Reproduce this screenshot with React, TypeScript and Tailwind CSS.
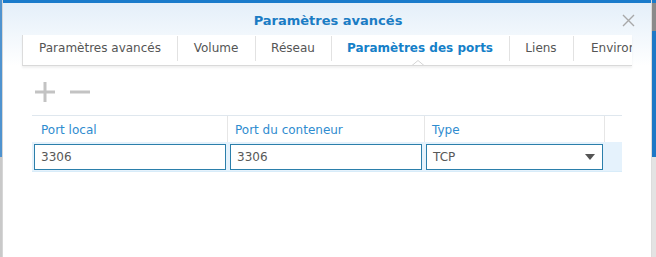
import React from 'react';

const tabs = [
  { name: 'Paramètres avancés', w: 'w-[154px]' },
  { name: 'Volume', w: 'w-[78px]' },
  { name: 'Réseau', w: 'w-[76px]' },
  { name: 'Paramètres des ports', w: 'w-[178px]', active: true },
  { name: 'Liens', w: 'w-[64px]' },
  { name: 'Environnement', w: 'w-[60px]' },
];

const PortInput = ({ value, className }: { value: string; className: string }) => (
  <div
    className={`h-[26px] border border-[#2b7fab] bg-white flex items-center pl-[6px] pt-[1px] text-[12px] text-[#585858] ${className}`}
  >
    {value}
  </div>
);

const App: React.FC = () => {
  return (
    <div
      className="w-[656px] h-[257px] flex overflow-hidden bg-white"
      style={{ fontFamily: '"DejaVu Sans", Verdana, sans-serif' }}
    >
      {/* background strip left */}
      <div className="w-[2px] flex flex-col">
        <div className="h-[157px] bg-[#4f93cf]" />
        <div className="flex-1 bg-[#c9c9c9]" />
      </div>

      {/* dialog */}
      <div className="w-[649px] flex flex-col border-l border-[#d6d6d6]">
        {/* header */}
        <div className="h-[3px] bg-[#1a7bcb]" />
        <div className="bg-gradient-to-b from-[#e4eff9] to-white">
          <div className="h-[32px] flex items-center relative pt-[3px]">
            <div className="flex-1 text-center text-[13px] font-bold text-[#1b7cc4] pl-[2px]">
              Paramètres avancés
            </div>
            <svg className="absolute left-[619px] top-[11px]" width="13" height="13" viewBox="0 0 13 13">
              <path d="M1 1 L12 12 M12 1 L1 12" stroke="#a8a8a8" strokeWidth="1.4" fill="none" />
            </svg>
          </div>

          {/* tabs */}
          <div className="ml-[19px] w-[610px] h-[31px] flex border-l border-[#dcdcdc] border-b border-b-[#d9d9d9] shadow-[0_2px_2px_rgba(0,0,0,0.06)] bg-white overflow-hidden relative">
            {tabs.map((t, i) => (
              <div key={t.name} className={`${t.w} shrink-0 h-full flex items-center relative`}>
                {i > 0 && <div className="absolute left-0 top-[1px] h-[25px] w-px bg-[#e2e2e2]" />}
                <div
                  className={`w-full text-[12px] whitespace-nowrap pb-[5px] ${
                    i === tabs.length - 1 ? 'pl-[18px]' : 'text-center'
                  } ${t.active ? 'font-bold text-[#1580c8]' : 'text-[#555]'}`}
                >
                  {t.name}
                </div>
                {t.active && (
                  <svg className="absolute left-[81px] bottom-[-1px]" width="12" height="6" viewBox="0 0 12 6">
                    <path d="M0 5.5 L6 0.5 L12 5.5" fill="white" stroke="#d4d4d4" strokeWidth="1" />
                  </svg>
                )}
              </div>
            ))}
          </div>
        </div>

        {/* toolbar */}
        <div className="h-[49px] flex items-center gap-[15px] pl-[32px] pt-[3px]">
          <svg width="20" height="20" viewBox="0 0 20 20">
            <path d="M10 0 V20 M0 10 H20" stroke="#c3c3c3" strokeWidth="3" />
          </svg>
          <svg width="20" height="20" viewBox="0 0 20 20">
            <path d="M0 10 H20" stroke="#c3c3c3" strokeWidth="3" />
          </svg>
        </div>

        {/* grid */}
        <div className="ml-[29px] w-[590px] flex flex-col">
          <div className="h-[27px] flex border-t border-[#dfe7ee] text-[12px] text-[#2f8ccf]">
            <div className="w-[196px] flex items-center pl-[9px] pt-[1px] border-r border-[#e6e6e6]">Port local</div>
            <div className="w-[197px] flex items-center pl-[7px] pt-[1px] border-r border-[#e6e6e6]">Port du conteneur</div>
            <div className="w-[180px] flex items-center pl-[7px] pt-[1px] border-r border-[#e6e6e6]">Type</div>
            <div className="flex-1" />
          </div>
          <div className="h-[30px] flex items-center bg-[#e5f2fc] border-b border-[#d8ecf9]">
            <div className="w-[196px] px-[2px]">
              <PortInput value="3306" className="w-full" />
            </div>
            <div className="w-[197px] pl-[2px] pr-[3px]">
              <PortInput value="3306" className="w-full" />
            </div>
            <div className="w-[180px] pl-[1px] pr-[2px]">
              <div className="h-[26px] border border-[#2b7fab] bg-white flex items-center justify-between pl-[6px] pr-[7px] pt-[1px] text-[12px] text-[#585858]">
                <span>TCP</span>
                <svg width="10" height="6" viewBox="0 0 10 6">
                  <path d="M0 0 H10 L5 6 Z" fill="#555" />
                </svg>
              </div>
            </div>
            <div className="flex-1" />
          </div>
        </div>
      </div>

      {/* background strip right */}
      <div className="flex-1 flex flex-col border-l border-[#dcdcdc]">
        <div className="h-[3px] bg-[#1a7bcb]" />
        <div className="h-[28px] bg-[#8a8a8a]" />
        <div className="h-[126px] bg-[#1e78c6]" />
        <div className="flex-1 bg-[#e3e3e3]" />
      </div>
    </div>
  );
};

export default App;
